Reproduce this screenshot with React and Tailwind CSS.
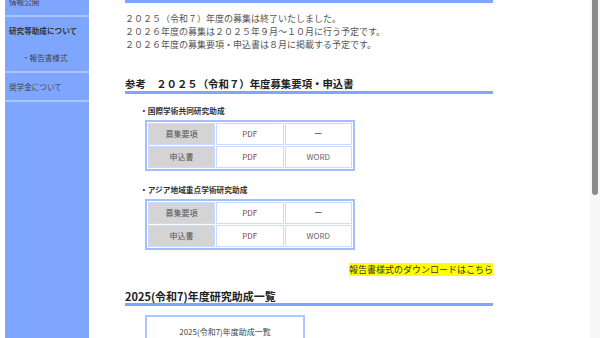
const sideItems = [
  { label: "情報公開", bold: false, sub: false, line: true },
  { label: "研究等助成について", bold: true, sub: false, line: false },
  { label: "・報告書様式", bold: false, sub: true, line: true },
  { label: "奨学金について", bold: false, sub: false, line: true },
];

const notices = [
  "２０２５（令和７）年度の募集は終了いたしました。",
  "２０２６年度の募集は２０２５年９月～１０月に行う予定です。",
  "２０２６年度の募集要項・申込書は８月に掲載する予定です。",
];

const grants = ["国際学術共同研究助成", "アジア地域重点学術研究助成"];

const DocTable = () => (
  <table className="ml-[20px] mt-[3px] w-[210px] table-fixed border-separate border-spacing-[1px] border-2 border-[#a3bfff] text-[8px]">
    <tbody>
      <tr>
        <td className="h-[22px] w-[67px] border border-[#cbdaff] bg-[#d4d4d4] text-center text-[#555]">募集要項</td>
        <td className="border border-[#cbdaff] text-center text-[#8e3a3a]">PDF</td>
        <td className="border border-[#cbdaff] text-center text-[#444]">ー</td>
      </tr>
      <tr>
        <td className="h-[22px] border border-[#cbdaff] bg-[#d4d4d4] text-center text-[#555]">申込書</td>
        <td className="border border-[#cbdaff] text-center text-[#8e3a3a]">PDF</td>
        <td className="border border-[#cbdaff] text-center text-[#666]">WORD</td>
      </tr>
    </tbody>
  </table>
);

const App = () => {
  return (
    <div
      className="flex h-[338px] w-[600px] overflow-hidden bg-white"
      style={{ fontFamily: '"Noto Sans CJK JP", "Noto Sans", sans-serif' }}
    >
      {/* sidebar */}
      <div className="ml-[5px] h-full w-[84px] shrink-0 overflow-hidden bg-[#7fa6ff]">
        <div className="-mt-[12px]">
          {sideItems.map((item) => (
            <div key={item.label}>
              <div
                className={`flex h-[27px] items-center text-[7.6px] ${
                  item.sub ? "pl-[17px]" : "pl-[4px]"
                } ${item.bold ? "font-bold text-[#333]" : "text-[#444]"}`}
              >
                {item.label}
              </div>
              {item.line && <div className="h-[2px] bg-[#adc5ff]" />}
            </div>
          ))}
        </div>
      </div>

      {/* main */}
      <div className="ml-[36px] w-[368px] shrink-0">
        <div className="h-[3px] bg-[#7fa6ff]" />

        <div className="mt-[9px] text-[9px] leading-[13px] text-[#555]">
          {notices.map((t) => (
            <p key={t}>{t}</p>
          ))}
        </div>

        <h2 className="mt-[26px] border-b-[3px] border-[#7fa6ff] text-[10.4px] font-bold leading-[14px] text-[#222]">
          参考　２０２５（令和７）年度募集要項・申込書
        </h2>

        {grants.map((g, i) => (
          <div key={g} className={i === 0 ? "mt-[11px]" : "mt-[13px]"}>
            <p className="ml-[15px] text-[7.7px] font-bold leading-[12px] text-[#333]">・{g}</p>
            <DocTable />
          </div>
        ))}

        <div className="mt-[14px] text-right text-[9px] leading-[12px]">
          <span className="bg-[#ffff00] text-[#333]">報告書様式のダウンロードはこちら</span>
        </div>

        <h2 className="mt-[13px] border-b-[3px] border-[#7fa6ff] text-[11px] font-bold leading-[14px] text-[#222]">
          2025(令和7)年度研究助成一覧
        </h2>

        <div className="ml-[20px] mt-[9px] h-[40px] w-[160px] border-2 border-[#aec6ff] pt-[9px] text-center text-[8px] leading-[12px] text-[#444]">
          2025(令和7)年度助成一覧
        </div>
      </div>

      {/* scrollbar */}
      <div className="ml-auto h-full w-[10px] shrink-0 bg-[#f7f7f7] pl-[2px]">
        <div className="h-[195px] w-[6px] rounded-b-[3px] bg-[#8c8c8c]" />
      </div>
    </div>
  );
};

export default App;
